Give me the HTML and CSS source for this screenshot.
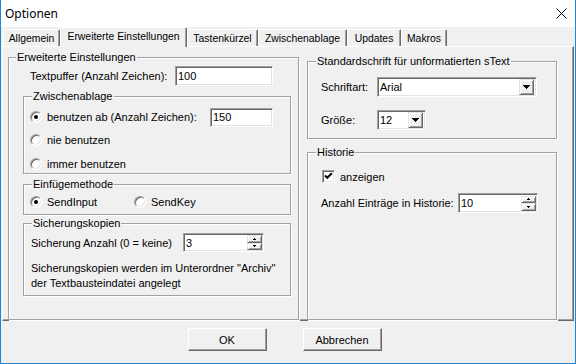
FILE: index.html
```html
<!DOCTYPE html>
<html lang="de">
<head>
    <meta charset="UTF-8">
    <meta name="viewport" content="width=device-width, initial-scale=1.0">
    <title>Optionen</title>
    <link rel="stylesheet" href="styles.css">
</head>
<body>
    <div class="window">
        <div class="titlebar">
            <span class="title">Optionen</span>
            <svg class="close" width="11" height="11" viewBox="0 0 11 11"><path d="M0.5 0.5L10.5 10.5M10.5 0.5L0.5 10.5" stroke="#000" stroke-width="1" fill="none"/></svg>
        </div>

        <div class="tabs">
            <div class="tab tab-allgemein">Allgemein</div>
            <div class="tab tab-erweitert active">Erweiterte Einstellungen</div>
            <div class="tab tab-tasten">Tastenkürzel</div>
            <div class="tab tab-zwischen">Zwischenablage</div>
            <div class="tab tab-updates">Updates</div>
            <div class="tab tab-makros">Makros</div>
        </div>

        <div class="panel">
            <fieldset class="group group-main">
                <legend>Erweiterte Einstellungen</legend>
                <div class="row row-puffer">
                    <span class="lbl lbl-puffer">Textpuffer (Anzahl Zeichen):</span>
                    <div class="field field-puffer">100</div>
                </div>

                <fieldset class="group sub sub-clip">
                    <legend>Zwischenablage</legend>
                    <div class="row opt opt-1">
                        <span class="radio on"></span>
                        <span class="opt-text opt-ab">benutzen ab (Anzahl Zeichen):</span>
                        <div class="field field-ab">150</div>
                    </div>
                    <div class="row opt opt-2">
                        <span class="radio"></span>
                        <span class="opt-text">nie benutzen</span>
                    </div>
                    <div class="row opt opt-3">
                        <span class="radio"></span>
                        <span class="opt-text">immer benutzen</span>
                    </div>
                </fieldset>

                <fieldset class="group sub sub-insert">
                    <legend>Einfügemethode</legend>
                    <div class="row opt opt-insert">
                        <div class="choice choice-input">
                            <span class="radio on"></span>
                            <span class="opt-text">SendInput</span>
                        </div>
                        <div class="choice">
                            <span class="radio"></span>
                            <span class="opt-text">SendKey</span>
                        </div>
                    </div>
                </fieldset>

                <fieldset class="group sub sub-backup">
                    <legend>Sicherungskopien</legend>
                    <div class="row row-backup">
                        <span class="lbl lbl-backup">Sicherung Anzahl (0 = keine)</span>
                        <div class="field spin spin-backup">
                            <span class="value">3</span>
                            <div class="arrows">
                                <span class="arrow"><svg width="3" height="2" viewBox="0 0 3 2"><path d="M1 0h1v1h1v1H0V1h1z"/></svg></span>
                                <span class="arrow"><svg width="3" height="2" viewBox="0 0 3 2"><path d="M0 0h3v1H2v1H1V1H0z"/></svg></span>
                            </div>
                        </div>
                    </div>
                    <p class="note">Sicherungskopien werden im Unterordner "Archiv"<br>der Textbausteindatei angelegt</p>
                </fieldset>
            </fieldset>

            <div class="col-right">
                <fieldset class="group group-font">
                    <legend>Standardschrift für unformatierten sText</legend>
                    <div class="row row-font">
                        <span class="lbl lbl-font">Schriftart:</span>
                        <div class="field combo combo-font">
                            <span class="value">Arial</span>
                            <span class="drop"><svg width="7" height="4" viewBox="0 0 7 4"><path d="M0 0h7v1H6v1H5v1H4v1H3V3H2V2H1V1H0z"/></svg></span>
                        </div>
                    </div>
                    <div class="row row-size">
                        <span class="lbl lbl-font">Größe:</span>
                        <div class="field combo combo-size">
                            <span class="value">12</span>
                            <span class="drop"><svg width="7" height="4" viewBox="0 0 7 4"><path d="M0 0h7v1H6v1H5v1H4v1H3V3H2V2H1V1H0z"/></svg></span>
                        </div>
                    </div>
                </fieldset>

                <fieldset class="group group-history">
                    <legend>Historie</legend>
                    <div class="row row-check">
                        <span class="checkbox"><svg width="9" height="9" viewBox="0 0 9 9"><path d="M1 3.5L3.3 5.8L7.8 1.3" stroke="#000" stroke-width="2" fill="none"/></svg></span>
                        <span class="opt-text">anzeigen</span>
                    </div>
                    <div class="row row-count">
                        <span class="lbl lbl-count">Anzahl Einträge in Historie:</span>
                        <div class="field spin spin-count">
                            <span class="value">10</span>
                            <div class="arrows">
                                <span class="arrow"><svg width="3" height="2" viewBox="0 0 3 2"><path d="M1 0h1v1h1v1H0V1h1z"/></svg></span>
                                <span class="arrow"><svg width="3" height="2" viewBox="0 0 3 2"><path d="M0 0h3v1H2v1H1V1H0z"/></svg></span>
                            </div>
                        </div>
                    </div>
                </fieldset>
            </div>
        </div>

        <div class="actions">
            <button class="btn">OK</button>
            <button class="btn">Abbrechen</button>
        </div>
    </div>
</body>
</html>
```

FILE: styles.css
```css
body {
    margin: 0;
    width: 576px;
    height: 364px;
    overflow: hidden;
    background-color: #f0f0f0;
    font-family: "Liberation Sans", Arial, sans-serif;
    font-size: 11px;
    color: #000;
}

.window {
    width: 576px;
    height: 364px;
    box-sizing: border-box;
    border: 1px solid #1c86d9;
    border-top: none;
    background: #f0f0f0;
    display: flex;
    flex-direction: column;
}

/* title bar */
.titlebar {
    height: 27px;
    background: #fff;
    display: flex;
    align-items: center;
    padding: 0 8px 0 4px;
}

.title {
    font-family: "Noto Sans", sans-serif;
    font-size: 12px;
    flex: 1;
}

.close {
    display: block;
}

/* tabs */
.tabs {
    height: 19px;
    display: flex;
    align-items: flex-end;
    padding-left: 2px;
}

.tab {
    box-sizing: border-box;
    height: 17px;
    border-top: 1px solid #fff;
    border-left: 1px solid #fff;
    border-right: 1px solid #696969;
    box-shadow: inset -1px 0 #a0a0a0;
    border-radius: 2px 2px 0 0;
    display: flex;
    align-items: center;
    justify-content: center;
    font-size: 10.4px;
    white-space: nowrap;
}

.tab.active {
    height: 20px;
    margin-bottom: -1px;
    padding-bottom: 3px;
    position: relative;
    z-index: 1;
    background: #f0f0f0;
}

.tab-allgemein { width: 57px; }
.tab-erweitert { width: 127px; }
.tab-tasten { width: 71px; }
.tab-zwischen { width: 89px; }
.tab-updates { width: 54px; }
.tab-makros { width: 46px; }

/* tab page */
.panel {
    height: 275px;
    box-sizing: border-box;
    margin: 0 1px;
    border: 1px solid;
    border-color: #fff #696969 #696969 #fff;
    box-shadow: inset -1px -1px #a0a0a0;
    padding: 4px 0 0 5px;
    display: grid;
    grid-template-columns: 291px 250px;
    column-gap: 8px;
    align-items: stretch;
}

.group {
    margin: 0;
    padding: 0;
    min-width: 0;
    border: 1px solid #a0a0a0;
    box-shadow: inset 1px 1px #fff, 1px 1px #fff;
}

.group legend {
    margin-left: 8px;
    padding: 0 1px;
    line-height: 13px;
    background: #f0f0f0;
}

.group-main {
    padding-bottom: 13px;
}

.group-main > legend {
    margin-left: 7px;
}

.row {
    display: flex;
    align-items: center;
}

.lbl,
.opt-text {
    white-space: nowrap;
}

/* sunken edit field */
.field {
    box-sizing: border-box;
    height: 20px;
    display: flex;
    align-items: center;
    background: #fff;
    border: 1px solid;
    border-color: #a0a0a0 #fff #fff #a0a0a0;
    box-shadow: inset 1px 1px #696969, inset -1px -1px #e3e3e3;
    padding-left: 2px;
}

.row-puffer {
    margin: 2px 0 0 21px;
    height: 20px;
}

.lbl-puffer { width: 145px; }
.field-puffer { width: 98px; }

.sub {
    margin: 4px 7px 0 14px;
}

.sub-clip { padding-bottom: 1px; }

.opt {
    margin-left: 6px;
    height: 16px;
}

.opt-1 {
    margin-top: 4px;
    height: 20px;
}

.opt-2 { margin-top: 5px; }
.opt-3 { margin-top: 8px; }

.opt-ab { width: 150px; }

.field-ab {
    width: 63px;
    margin-left: 13px;
    height: 19px;
}

.radio {
    box-sizing: border-box;
    width: 12px;
    height: 12px;
    flex: none;
    border-radius: 50%;
    background: #fff;
    border: 1px solid;
    border-color: #a0a0a0 #fff #fff #a0a0a0;
    box-shadow: inset 1px 1px #696969, inset -1px -1px #e3e3e3;
    margin-right: 5px;
}

.radio.on::after {
    content: "";
    display: block;
    width: 4px;
    height: 4px;
    border-radius: 50%;
    background: #000;
    margin: 3px auto 0;
}

.sub-insert {
    margin-top: 4px;
    padding-bottom: 4px;
}

.opt-insert { margin-top: 3px; }

.choice {
    display: flex;
    align-items: center;
}

.choice-input { width: 104px; }

.sub-backup {
    margin-top: 2px;
    padding-bottom: 4px;
}

.row-backup {
    margin: 3px 0 0 7px;
    height: 19px;
}

.lbl-backup { width: 152px; }

.spin {
    height: 19px;
    padding-right: 1px;
}

.spin .value,
.combo .value {
    flex: 1;
}

.spin-backup { width: 81px; }

.arrows {
    width: 15px;
    height: 15px;
    display: flex;
    flex-direction: column;
}

.arrow,
.drop {
    flex: 1;
    box-sizing: border-box;
    display: flex;
    align-items: center;
    justify-content: center;
    background: #f0f0f0;
    border: 1px solid;
    border-color: #e3e3e3 #696969 #696969 #e3e3e3;
    box-shadow: inset 1px 1px #fff, inset -1px -1px #a0a0a0;
}

.arrow svg,
.drop svg {
    display: block;
}

.note {
    margin: 9px 0 0 7px;
    line-height: 15px;
}

/* right column */
.col-right {
    display: flex;
    flex-direction: column;
    padding-top: 4px;
}

.group-font {
    padding-bottom: 8px;
}

.row-font {
    margin: 9px 0 0 13px;
    height: 20px;
}

.row-size {
    margin: 13px 0 0 13px;
    height: 20px;
}

.lbl-font { width: 56px; }

.combo {
    padding-right: 2px;
}

.combo-font { width: 160px; }
.combo-size { width: 49px; }

.drop {
    flex: none;
    width: 15px;
    height: 16px;
}

.group-history {
    margin-top: 7px;
    flex: 1;
}

.row-check {
    margin: 11px 0 0 14px;
    height: 13px;
}

.checkbox {
    box-sizing: border-box;
    width: 13px;
    height: 13px;
    display: flex;
    align-items: center;
    justify-content: center;
    background: #fff;
    border: 1px solid;
    border-color: #a0a0a0 #fff #fff #a0a0a0;
    box-shadow: inset 1px 1px #696969, inset -1px -1px #e3e3e3;
    margin-right: 5px;
}

.checkbox svg {
    display: block;
}

.row-count {
    margin: 10px 0 0 13px;
    height: 20px;
}

.lbl-count { width: 137px; }

.spin-count {
    width: 80px;
    height: 20px;
}

/* dialog buttons */
.actions {
    display: flex;
    justify-content: center;
    gap: 36px;
    padding-right: 7px;
    margin-top: 7px;
}

.btn {
    width: 79px;
    height: 23px;
    box-sizing: border-box;
    padding: 0;
    border: 1px solid;
    border-color: #fff #696969 #696969 #fff;
    box-shadow: inset -1px -1px #a0a0a0;
    background: #f0f0f0;
    font-family: "Liberation Sans", Arial, sans-serif;
    font-size: 11px;
    color: #000;
}
```
